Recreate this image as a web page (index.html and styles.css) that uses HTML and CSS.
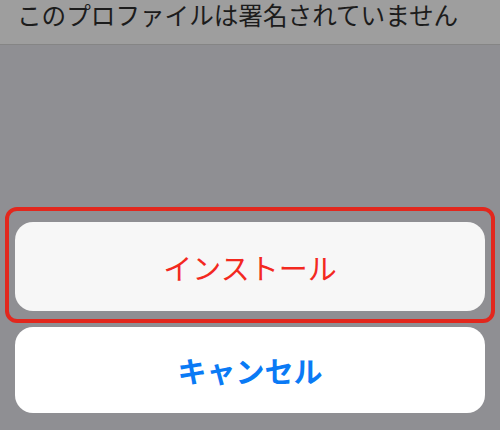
FILE: index.html
```html
<!DOCTYPE html>
<html lang="ja">
<head>
    <meta charset="UTF-8">
    <meta name="viewport" content="width=device-width, initial-scale=1.0">
    <title>プロファイル</title>
    <link rel="stylesheet" href="styles.css">
</head>
<body>
    <div class="header">このプロファイルは署名されていません</div>

    <div class="actions">
        <div class="install-wrap">
            <button class="sheet-btn install">インストール</button>
            <div class="highlight"></div>
        </div>
        <button class="sheet-btn cancel">キャンセル</button>
    </div>
</body>
</html>
```

FILE: styles.css
```css
body {
    margin: 0;
    background-color: #8f8f93;
    font-family: "Noto Sans CJK JP", "Noto Sans", sans-serif;
    overflow: hidden;
}
.header {
    height: 45px;
    box-sizing: border-box;
    padding: 0 0 0 17px;
    background-color: #9e9e9e;
    border-bottom: 1px solid #858585;
    color: #1c1c1c;
    font-size: 24.6px;
    line-height: 28px;
    white-space: nowrap;
}
.actions {
    display: flex;
    flex-direction: column;
    gap: 16px;
    padding: 177px 15px 0;
}
.install-wrap {
    position: relative;
}
.sheet-btn {
    display: block;
    width: 100%;
    border: none;
    border-radius: 18px;
    font-family: inherit;
    font-size: 29px;
    padding: 0;
    cursor: pointer;
}
.install {
    height: 89px;
    background-color: #f7f7f7;
    color: #f3291f;
    font-weight: 400;
}
.cancel {
    height: 86px;
    background-color: #ffffff;
    color: #0a7af5;
    font-weight: 700;
}
.highlight {
    position: absolute;
    top: -15px;
    left: -10px;
    right: -10px;
    bottom: -12px;
    border: 4px solid #e2271d;
    border-radius: 12px;
    pointer-events: none;
}
```
